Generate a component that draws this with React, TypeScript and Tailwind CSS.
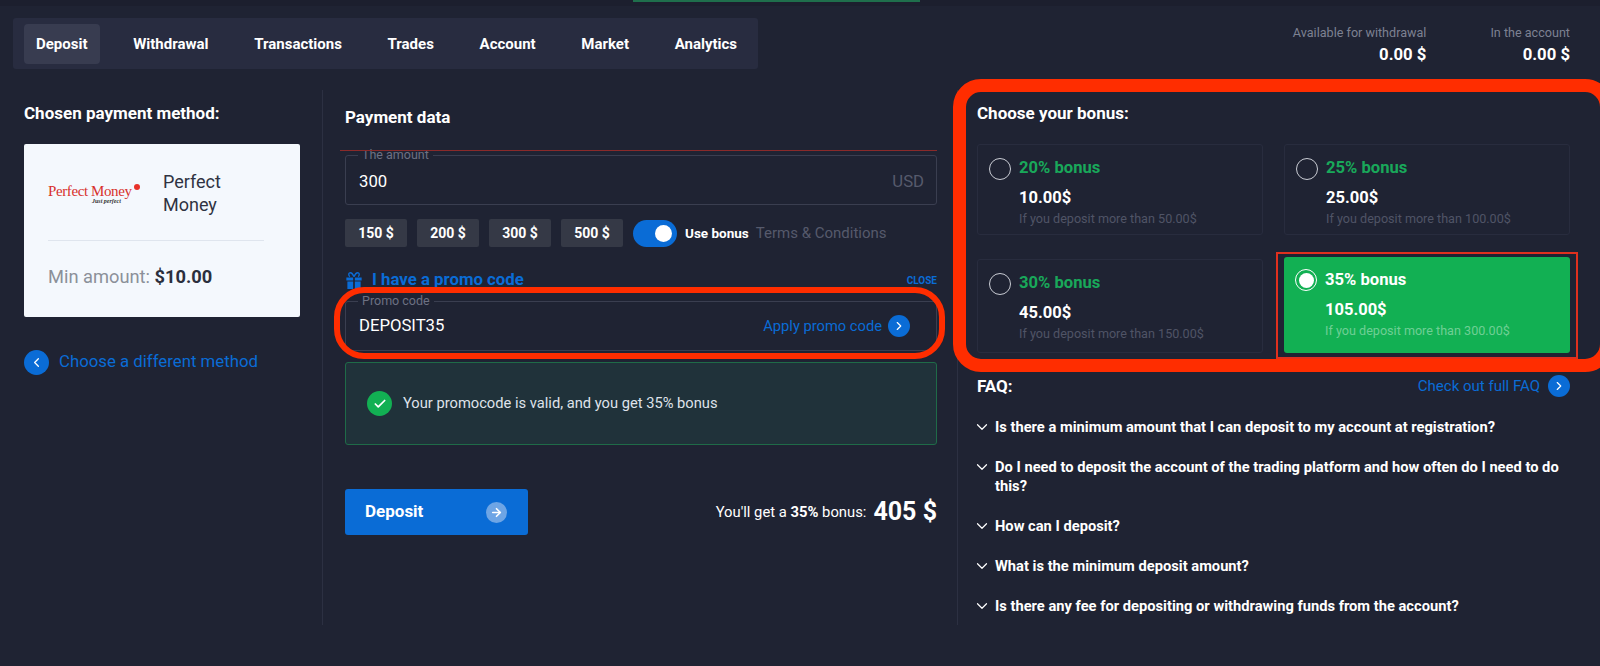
import { ArrowRight, Check, ChevronDown, ChevronLeft, ChevronRight } from "lucide-react";

const tabs = ["Deposit", "Withdrawal", "Transactions", "Trades", "Account", "Market", "Analytics"];
const amounts = ["150 $", "200 $", "300 $", "500 $"];

const bonuses = [
  { label: "20% bonus", value: "10.00$", note: "If you deposit more than 50.00$" },
  { label: "25% bonus", value: "25.00$", note: "If you deposit more than 100.00$" },
  { label: "30% bonus", value: "45.00$", note: "If you deposit more than 150.00$" },
  { label: "35% bonus", value: "105.00$", note: "If you deposit more than 300.00$", active: true },
];

const faq = [
  "Is there a minimum amount that I can deposit to my account at registration?",
  "Do I need to deposit the account of the trading platform and how often do I need to do this?",
  "How can I deposit?",
  "What is the minimum deposit amount?",
  "Is there any fee for depositing or withdrawing funds from the account?",
];

const BlueDot = () => (
  <span className="flex h-[22px] w-[22px] shrink-0 items-center justify-center rounded-full bg-[#0a6cd6] text-white">
    <ChevronRight size={14} strokeWidth={2} />
  </span>
);

const GiftIcon = () => (
  <svg viewBox="0 0 20 20" className="h-[17px] w-[18px] shrink-0 fill-[#0a6cd6]">
    <path d="M1 6.500h8v3.500H1zM11 6.500h8v3.500h-8zM2.200 11.200H9V20H2.200zM11 11.200h6.800V20H11z" />
    <path d="M10 5.500C8.500 2 6.500.5 5 1 3.400 1.600 3.400 4.400 5.200 5.500M10 5.500C11.500 2 13.500.5 15 1c1.600.6 1.600 3.400-.2 4.500" fill="none" stroke="#0a6cd6" strokeWidth="1.600" />
  </svg>
);

const App = () => {
  return (
    <div className="relative h-[666px] w-[1600px] overflow-hidden bg-[#1f2333] font-['Roboto',sans-serif] text-white">
      {/* top strip */}
      <div className="h-[6px] bg-[#1c1f2e]">
        <div className="ml-[633px] h-[2px] w-[287px] bg-[#1f6f4c]" />
      </div>

      {/* tabs & balances */}
      <div className="flex items-start justify-between pt-[12px] pl-[13px] pr-[30px]">
        <div className="flex h-[51px] w-[745px] items-center gap-[21.7px] rounded-[3px] bg-[#282c40] pl-[11px]">
          {tabs.map((tab, i) => (
            <div
              key={tab}
              className={
                i === 0
                  ? "flex h-[40px] items-center rounded-[4px] bg-[#383c50] px-3 pt-[1px] text-[15px] font-bold"
                  : "flex h-[40px] items-center px-3 pt-[1px] text-[15px] font-bold"
              }
            >
              {tab}
            </div>
          ))}
        </div>
        <div className="flex gap-[64px] text-right">
          <div>
            <div className="pt-[6px] text-[12.6px] leading-[17px] text-[#7d8192]">Available for withdrawal</div>
            <div className="mt-[4px] text-[16.7px] leading-[20px] font-bold">0.00 $</div>
          </div>
          <div>
            <div className="pt-[6px] text-[12.6px] leading-[17px] text-[#7d8192]">In the account</div>
            <div className="mt-[4px] text-[16.7px] leading-[20px] font-bold">0.00 $</div>
          </div>
        </div>
      </div>

      <div className="mt-[21px] flex h-[535px]">
        {/* payment method */}
        <div className="w-[323px] border-r border-[#2c3042] pl-[24px] pt-[11px]">
          <h2 className="text-[17px] leading-[24px] font-bold">Chosen payment method:</h2>
          <div className="mt-[19px] h-[173px] w-[276px] rounded-[2px] bg-[#f4f8fd] px-[24px] pt-[26px]">
            <div className="flex h-[70px] items-start">
              <div className="relative w-[115px] pt-[14px] font-['Liberation_Serif',serif] text-[15px] leading-[14px] tracking-[-0.4px] text-[#d8312c]">
                Perfect Money
                <div className="pl-[44px] text-[6px] leading-[7px] font-bold italic tracking-normal text-[#333]">Just perfect</div>
                <span className="absolute left-[86px] top-[14px] h-[6px] w-[6px] rounded-full bg-[#e8312a]" />
              </div>
              <div className="text-[18px] leading-[23px] text-[#2f3342]">
                Perfect
                <br />
                Money
              </div>
            </div>
            <div className="w-[216px] border-t border-[#dfe5ee] pt-[24px] text-[18.3px] leading-[24px]">
              <span className="text-[#8b9099]">Min amount: </span>
              <span className="font-bold text-[#2b2f3d]">$10.00</span>
            </div>
          </div>
          <div className="mt-[33px] flex h-[24px] items-center gap-[10px]">
            <span className="flex h-[25px] w-[25px] items-center justify-center rounded-full bg-[#0a6cd6]">
              <ChevronLeft size={15} strokeWidth={2} />
            </span>
            <span className="text-[16.8px] text-[#0a6cd6]">Choose a different method</span>
          </div>
        </div>

        {/* payment data */}
        <div className="relative w-[635px] border-r border-[#2c3042] pl-[22px] pr-[20px] pt-[15px]">
          <h2 className="text-[17px] leading-[24px] font-bold">Payment data</h2>
          <fieldset className="mt-[19px] flex h-[57px] items-center justify-between rounded-[3px] border border-[#3a3e50] pb-[2px] pl-[13px] pr-[12px]">
            <legend className="ml-[-1px] px-[4px] text-[12.5px] leading-[14px] text-[#6d7183]">The amount</legend>
            <span className="text-[16.7px]">300</span>
            <span className="text-[16.7px] text-[#565a6c]">USD</span>
          </fieldset>
          <div className="mt-[14px] flex h-[28px] items-center">
            <div className="flex gap-[10px]">
              {amounts.map((a) => (
                <div key={a} className="flex h-[28px] w-[62px] items-center justify-center rounded-[2px] bg-[#353946] text-[14px] font-bold">
                  {a}
                </div>
              ))}
            </div>
            <div className="ml-[10px] flex h-[27px] w-[44px] items-center justify-end rounded-full bg-[#0a6cd6] pr-[5px]">
              <span className="h-[17px] w-[17px] rounded-full bg-white" />
            </div>
            <span className="ml-[8px] text-[13.5px] font-bold">Use bonus</span>
            <span className="ml-[7px] text-[15px] text-[#565a6c]">Terms &amp; Conditions</span>
          </div>
          <div className="mt-[23px] flex h-[20px] items-center justify-between">
            <div className="flex items-center gap-[9px]">
              <GiftIcon />
              <span className="text-[16.8px] font-bold text-[#0a6cd6]">I have a promo code</span>
            </div>
            <span className="text-[10px] font-bold text-[#0a6cd6]">CLOSE</span>
          </div>
          <fieldset className="mt-[4px] flex h-[57px] items-center justify-between rounded-[3px] border border-[#3a3e50] pb-[6px] pl-[13px] pr-[26px]">
            <legend className="ml-[-1px] px-[4px] text-[12.5px] leading-[14px] text-[#6d7183]">Promo code</legend>
            <span className="text-[16.7px]">DEPOSIT35</span>
            <span className="flex items-center gap-[6px] text-[14.7px] text-[#0a6cd6]">
              Apply promo code
              <BlueDot />
            </span>
          </fieldset>
          <div className="mt-[11px] flex h-[83px] items-center gap-[11px] rounded-[3px] border border-[#1f6b48] bg-[#20323a] pl-[21px]">
            <span className="flex h-[25px] w-[25px] items-center justify-center rounded-full bg-[#12b053]">
              <Check size={14} strokeWidth={3} />
            </span>
            <span className="text-[14.7px] text-[#dfe3ea]">Your promocode is valid, and you get 35% bonus</span>
          </div>
          <div className="mt-[44px] flex items-center justify-between">
            <div className="flex h-[46px] w-[183px] items-center justify-between rounded-[3px] bg-[#0a6cd6] pl-[20px] pr-[21px]">
              <span className="text-[17px] font-bold">Deposit</span>
              <span className="flex h-[21px] w-[21px] items-center justify-center rounded-full bg-[#6ea5e5]">
                <ArrowRight size={13} strokeWidth={3} />
              </span>
            </div>
            <div className="flex items-center gap-[7px]">
              <span className="text-[14.8px]">
                You'll get a <b>35%</b> bonus:
              </span>
              <span className="text-[25px] font-bold">405 $</span>
            </div>
          </div>
          {/* stray red line in the screenshot */}
          <div className="absolute left-[17px] right-[20px] top-[60px] h-[1px] bg-[#8a2a2a]" />
        </div>

        {/* bonus & faq */}
        <div className="flex-1 pl-[19px] pr-[30px] pt-[11px]">
          <h2 className="text-[17px] leading-[24px] font-bold">Choose your bonus:</h2>
          <div className="mt-[19px] grid grid-cols-2 grid-rows-[91px_94px] gap-x-[21px] gap-y-[24px]">
            {bonuses.map((b) => (
              <div
                key={b.label}
                className={
                  b.active
                    ? "mt-[-2px] flex gap-[8px] rounded-[3px] bg-[#12b053] pl-[11px] pt-[12px]"
                    : "flex gap-[8px] rounded-[3px] border border-[#282c3e] pl-[11px] pt-[12px]"
                }
              >
                {b.active ? (
                  <span className="flex h-[22px] w-[22px] shrink-0 items-center justify-center rounded-full border border-white">
                    <span className="h-[15px] w-[15px] rounded-full bg-white" />
                  </span>
                ) : (
                  <span className="mt-[1px] h-[22px] w-[22px] shrink-0 rounded-full border border-[#c9ccd4]" />
                )}
                <div>
                  <div className={b.active ? "text-[16.6px] leading-[22px] font-bold" : "text-[16.6px] leading-[22px] font-bold text-[#19a85a]"}>
                    {b.label}
                  </div>
                  <div className="mt-[9px] text-[16.5px] leading-[20px] font-bold">{b.value}</div>
                  <div className={b.active ? "mt-[2px] text-[12.6px] leading-[17px] text-[#6fcf95]" : "mt-[2px] text-[12.6px] leading-[17px] text-[#505466]"}>
                    {b.note}
                  </div>
                </div>
              </div>
            ))}
          </div>
          <div className="mt-[22px] flex h-[22px] items-center justify-between">
            <h2 className="pt-[1px] text-[17px] font-bold">FAQ:</h2>
            <span className="flex items-center gap-[8px] text-[15px] text-[#0a6cd6]">
              Check out full FAQ
              <BlueDot />
            </span>
          </div>
          <div className="mt-[21px] flex flex-col gap-[21px]">
            {faq.map((q) => (
              <div key={q} className="flex gap-[4px] text-[14.7px] leading-[19px] font-bold">
                <ChevronDown size={18} strokeWidth={1.6} className="ml-[-4px] shrink-0" />
                <span>{q}</span>
              </div>
            ))}
          </div>
        </div>
      </div>

      {/* red annotations drawn over the screenshot */}
      <div className="absolute left-[334px] top-[287px] h-[72px] w-[611px] rounded-[30px] border-[6px] border-[#ff2d00]" />
      <div className="absolute left-[953px] top-[79px] h-[293px] w-[660px] rounded-[28px] border-[13px] border-[#ff2d00]" />
      <div className="absolute left-[1276px] top-[252px] h-[107px] w-[302px] border-2 border-[#e0301e]" />
    </div>
  );
};

export default App;
